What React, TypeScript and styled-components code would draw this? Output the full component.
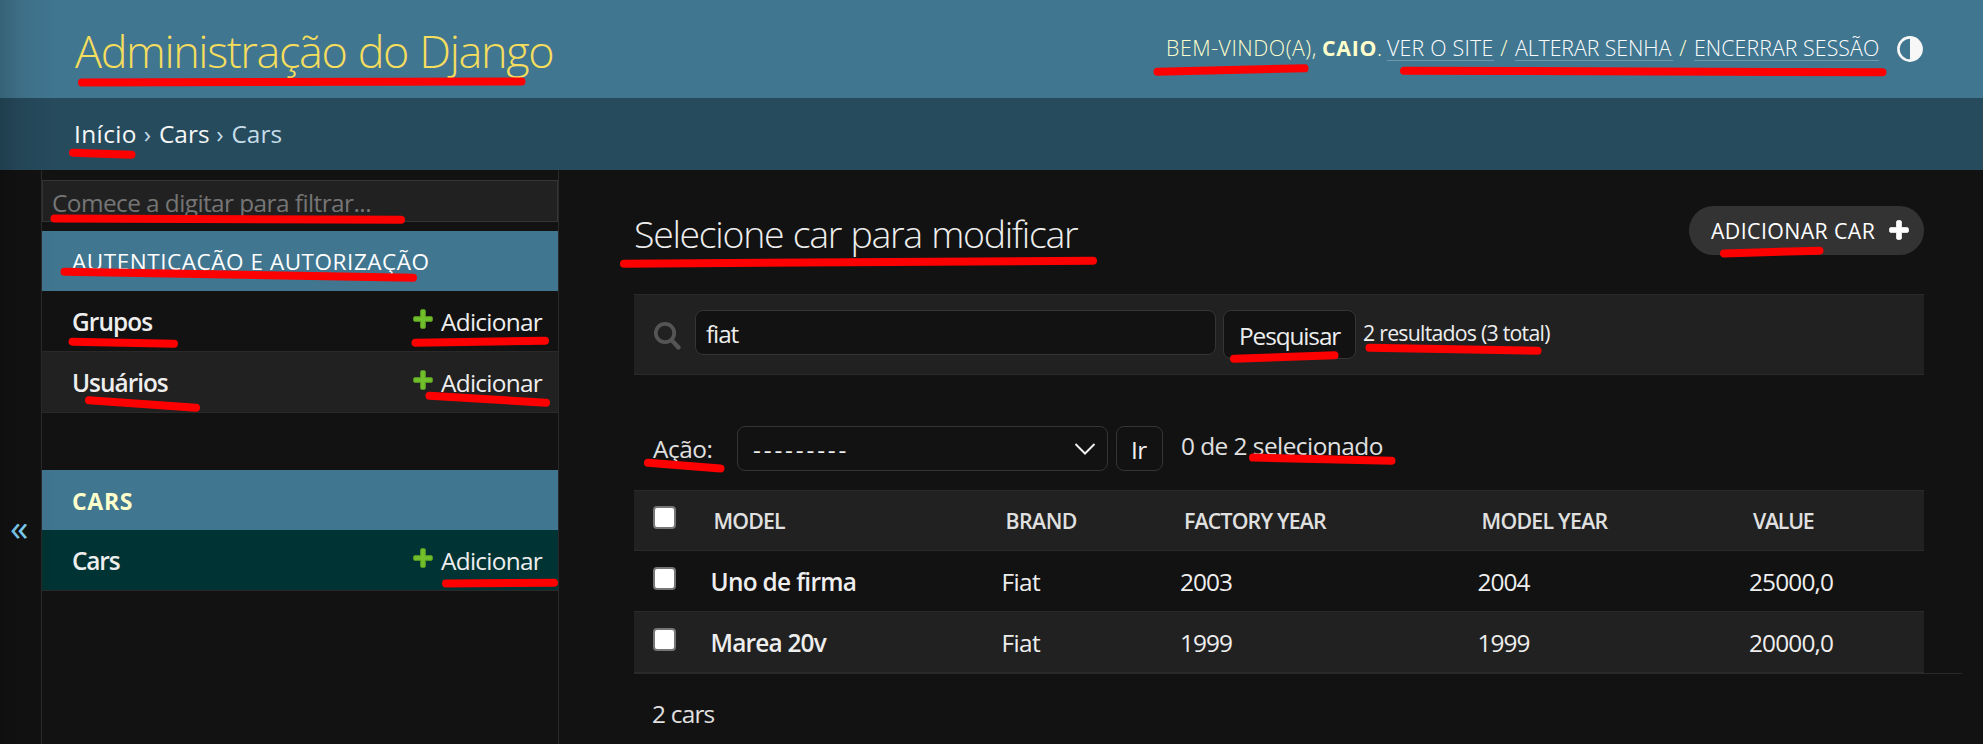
import React from 'react';
import styled, { createGlobalStyle } from 'styled-components';

const GlobalStyle = createGlobalStyle`
  * { box-sizing: border-box; }
  body {
    margin: 0;
    background: #121212;
    color: #eeeeee;
    font-family: "Open Sans", "Noto Sans", sans-serif;
    font-size: 24.4px;
    line-height: 30px;
    overflow: hidden;
  }
`;

const Page = styled.div`
  position: relative;
  width: 1983px;
  height: 744px;
  display: flex;
  flex-direction: column;
  overflow: hidden;
  white-space: nowrap;
`;

const Text = styled.span<{ $ls?: number }>`
  letter-spacing: ${p => p.$ls ?? 0}px;
`;

/* ---------- header ---------- */

const Header = styled.header`
  height: 98px;
  flex: none;
  display: flex;
  justify-content: space-between;
  padding: 0 60px 0 75px;
  background: #417690;
  color: #ffffcc;
`;

const SiteName = styled.h1`
  margin: 0;
  padding-top: 3px;
  font-size: 45px;
  font-weight: 300;
  line-height: 96px;
  letter-spacing: -1.39px;
  word-spacing: 1px;
  color: #f5dd5d;
`;

const UserTools = styled.div`
  display: flex;
  height: 30px;
  margin-top: 32px;
  font-size: 21.3px;
  font-weight: 300;
  line-height: 31px;
`;

const Welcome = styled.span`
  width: 156px;
  letter-spacing: 0.55px;
`;

const UserName = styled.strong`
  width: 55px;
  font-weight: 700;
  letter-spacing: 0.7px;
`;

const Dot = styled.span`
  width: 10px;
`;

const ToolLink = styled.a<{ $w: number; $ls: number }>`
  width: ${p => p.$w}px;
  height: 29px;
  border-bottom: 1px solid rgba(255, 255, 255, 0.25);
  letter-spacing: ${p => p.$ls}px;
  color: #ffffff;
`;

const Slash = styled.span`
  width: 21px;
  padding-right: 1px;
  text-align: center;
`;

const ThemeIcon = styled.svg`
  width: 26px;
  height: 26px;
  margin: 4px 0 0 18px;
`;

const Breadcrumbs = styled.nav`
  height: 72px;
  flex: none;
  display: flex;
  align-items: center;
  padding: 0 75px 0 74px;
  background: #264b5d;
  color: #c4dce8;
`;

const Crumb = styled.a<{ $w: number; $ls?: number }>`
  width: ${p => p.$w}px;
  letter-spacing: ${p => p.$ls ?? 0}px;
  color: #f7f7f7;
`;

const Arrow = styled.span`
  width: 23px;
  text-align: center;
`;

/* ---------- sidebar ---------- */

const Body = styled.div`
  flex: 1;
  display: flex;
  min-height: 0;
`;

const Toggle = styled.div`
  width: 42px;
  padding: 342px 0 0 10px;
  border-right: 1px solid #2a2a2a;
  color: #81d4fa;
  font-size: 37px;
`;

const Sidebar = styled.aside`
  width: 517px;
  border-right: 1px solid #2a2a2a;
  padding-top: 10px;
`;

const Filter = styled.div`
  height: 42px;
  margin-bottom: 9px;
  padding: 7px 9px;
  line-height: 30px;
  border: 1px solid #353535;
  background: #212121;
  color: #757575;
  letter-spacing: -0.57px;
`;

const Module = styled.section`
  margin-bottom: 57px;
`;

const Caption = styled.h2<{ $current?: boolean; $ls: number }>`
  margin: 0;
  height: 60px;
  padding: 2px 0 0 30px;
  background: #417690;
  font-size: ${p => (p.$current ? 23 : 22.5)}px;
  line-height: 58px;
  font-weight: ${p => (p.$current ? 700 : 400)};
  color: ${p => (p.$current ? '#ffffcc' : '#ffffff')};
  letter-spacing: ${p => p.$ls}px;
`;

const ModelRow = styled.div<{ $tone: string }>`
  height: 61px;
  display: flex;
  align-items: center;
  justify-content: space-between;
  padding: 2px 15px 0 30px;
  border-bottom: 1px solid #2a2a2a;
  background: ${p => p.$tone};
`;

const ModelName = styled.strong<{ $ls: number }>`
  font-weight: 600;
  letter-spacing: ${p => p.$ls}px;
`;

const AddLink = styled.a`
  display: flex;
  width: 130px;
  gap: 8px;
  letter-spacing: -0.72px;
`;

const PlusSvg = styled.svg<{ $top: number }>`
  width: 20px;
  height: 20px;
  flex: none;
  margin-top: ${p => p.$top}px;
`;

/* ---------- main ---------- */

const Main = styled.main`
  flex: 1;
  padding: 36px 21px 0 75px;
`;

const Content = styled.div`
  width: 1290px;
`;

const TitleRow = styled.div`
  display: flex;
  justify-content: space-between;
  height: 49px;
  margin-bottom: 39px;
`;

const Title = styled.h2`
  margin: 0;
  padding-top: 4px;
  font-size: 37.5px;
  line-height: 48px;
  font-weight: 300;
  letter-spacing: -1.32px;
  word-spacing: 1px;
`;

const AddButton = styled.a`
  display: flex;
  align-items: center;
  justify-content: space-between;
  width: 235px;
  height: 49px;
  padding: 0 15px 0 22px;
  border-radius: 28px;
  background: #333333;
  color: #ffffff;
  font-size: 21.3px;
`;

const SearchBar = styled.div`
  display: flex;
  height: 81px;
  padding: 15px 0 0 20px;
  border: solid #2a2a2a;
  border-width: 1px 0;
  background: #212121;
  margin-bottom: 51px;
`;

const SearchIcon = styled.svg`
  width: 28px;
  height: 29px;
  margin: 11px 13px 0 0;
`;

const Field = styled.div<{ $w: number; $h: number; $pad: number }>`
  display: flex;
  align-items: center;
  width: ${p => p.$w}px;
  height: ${p => p.$h}px;
  padding: 2px 0 0 ${p => p.$pad}px;
  border: 1px solid #353535;
  border-radius: 8px;
  background: #121212;
`;

const SearchButton = styled(Field)`
  margin: 0 7px;
`;

const Results = styled.span`
  font-size: 21.3px;
  line-height: 46px;
  letter-spacing: -0.76px;
`;

const Actions = styled.div`
  display: flex;
  align-items: center;
  height: 45px;
  margin-bottom: 19px;
  padding-left: 19px;
`;

const ActionLabel = styled.label`
  width: 84px;
  letter-spacing: -0.43px;
  color: #e0e0e0;
`;

const SelectBox = styled(Field)`
  justify-content: space-between;
  padding-right: 11px;
  margin-right: 8px;
`;

const Counter = styled.span`
  padding: 0 0 5px 18px;
  letter-spacing: -0.53px;
  color: #e0e0e0;
`;

const Row = styled.div<{ $kind: 'head' | 'odd' | 'even' }>`
  display: grid;
  grid-template-columns: 66px 292px 178.5px 297.5px 271.5px 184.5px;
  align-items: center;
  height: ${p => (p.$kind === 'odd' ? 60 : p.$kind === 'even' ? 62 : 61)}px;
  border: solid #2a2a2a;
  border-width: ${p => (p.$kind === 'odd' ? '0' : '1px 0')};
  background: ${p => (p.$kind === 'odd' ? '#121212' : '#212121')};
`;

const Th = styled.div<{ $ls: number }>`
  padding: 1px 0 0 13.500px;
  font-size: 21.3px;
  font-weight: 600;
  color: #e0e0e0;
  letter-spacing: ${p => p.$ls}px;
`;

const Td = styled.div<{ $ls: number; $strong?: boolean }>`
  padding: 1px 0 0 ${p => (p.$strong ? 10.5 : 9.5)}px;
  font-weight: ${p => (p.$strong ? 600 : 400)};
  letter-spacing: ${p => p.$ls}px;
`;

const Check = styled.span`
  width: 23px;
  height: 23px;
  margin: 0 0 6px 19px;
  border: 2px solid #767676;
  border-radius: 4px;
  background: #ffffff;
`;

const Paginator = styled.div`
  border-top: 1px solid #2a2a2a;
  padding: 25px 0 0 18px;
  letter-spacing: -0.78px;
  color: #e0e0e0;
`;

/* ---------- overlays ---------- */

const EdgeShadow = styled.div`
  position: absolute;
  inset: 0 auto 0 0;
  width: 56px;
  background: linear-gradient(to right, rgba(0, 0, 0, 0.17), rgba(0, 0, 0, 0.06) 40%, rgba(0, 0, 0, 0));
  pointer-events: none;
`;

const Marks = styled.svg`
  position: absolute;
  inset: 0;
  pointer-events: none;
`;

const STROKES = [
  [82, 82.5, 521.5, 81.5], [73, 152.7, 131.5, 154.7], [54.5, 218.6, 401, 219.7],
  [64.5, 271.7, 413, 277.7], [72.5, 341.7, 174, 343.7], [415.5, 342.7, 545, 340.7],
  [89, 400.3, 196, 407.7], [429.5, 395.7, 546, 402.7], [446, 583.5, 554, 582.7],
  [1157.5, 71.7, 1304.5, 68.3], [1404, 70.7, 1882.5, 72.3], [624, 263.7, 1093, 260.8],
  [1724, 253.4, 1819.5, 250.7], [1234, 358.7, 1334.5, 355.3], [1369.5, 347.7, 1537.5, 350.7],
  [648, 462.7, 720.5, 468.5], [1253, 457.6, 1391.5, 460.7],
];

function Plus({ fill, edge, top = 0 }: { fill: string; edge?: string; top?: number }) {
  return (
    <PlusSvg $top={top} viewBox="0 0 20 20">
      <path
        d="M8.6.7h2.8q.9 0 .9.9v6.1h6.1q.9 0 .9.9v2.8q0 .9-.9.9h-6.1v6.1q0 .9-.9.9H8.6q-.9 0-.9-.9v-6.1H1.6q-.9 0-.9-.9V8.6q0-.9.9-.9h6.1V1.6q0-.9.9-.9z"
        fill={fill} stroke={edge ?? fill} strokeWidth="1"
      />
    </PlusSvg>
  );
}

function Model({ name, ls, tone }: { name: string; ls: number; tone: string }) {
  return (
    <ModelRow $tone={tone}>
      <ModelName $ls={ls}>{name}</ModelName>
      <AddLink><Plus fill="#70bf2b" edge="#5fa225" top={2} /><span>Adicionar</span></AddLink>
    </ModelRow>
  );
}

const CARS: [string, number, string, string, string][] = [
  ['Uno de firma', -0.68, '2003', '2004', '25000,0'],
  ['Marea 20v', -0.8, '1999', '1999', '20000,0'],
];

export default function App() {
  return (
    <Page>
      <GlobalStyle />
      <Header>
        <SiteName>Administração do Django</SiteName>
        <UserTools>
          <Welcome>BEM-VINDO(A),</Welcome>
          <UserName>CAIO</UserName>
          <Dot>.</Dot>
          <ToolLink $w={107} $ls={0.26}>VER O SITE</ToolLink>
          <Slash>/</Slash>
          <ToolLink $w={158} $ls={-0.07}>ALTERAR SENHA</ToolLink>
          <Slash>/</Slash>
          <ToolLink $w={185} $ls={0.08}>ENCERRAR SESSÃO</ToolLink>
          <ThemeIcon viewBox="0 0 26 26">
            <circle cx="13" cy="13" r="11.6" fill="none" stroke="#f7f7f7" strokeWidth="2.6" />
            <path d="M13 1a12 12 0 0 1 0 24z" fill="#f7f7f7" />
          </ThemeIcon>
        </UserTools>
      </Header>
      <Breadcrumbs>
        <Crumb $w={62} $ls={0.4}>Início</Crumb>
        <Arrow>›</Arrow>
        <Crumb $w={49.5}>Cars</Crumb>
        <Arrow>›</Arrow>
        <span>Cars</span>
      </Breadcrumbs>
      <Body>
        <Toggle>«</Toggle>
        <Sidebar>
          <Filter>Comece a digitar para filtrar...</Filter>
          <Module>
            <Caption $ls={0.55}>AUTENTICAÇÃO E AUTORIZAÇÃO</Caption>
            <Model name="Grupos" ls={-0.9} tone="#121212" />
            <Model name="Usuários" ls={-1} tone="#212121" />
          </Module>
          <Module>
            <Caption $current $ls={0.7}>CARS</Caption>
            <Model name="Cars" ls={-1.14} tone="#003333" />
          </Module>
        </Sidebar>
        <Main>
          <Content>
            <TitleRow>
              <Title>Selecione car para modificar</Title>
              <AddButton><Text $ls={0.4}>ADICIONAR CAR</Text><Plus fill="#ffffff" top={-2} /></AddButton>
            </TitleRow>
            <SearchBar>
              <SearchIcon viewBox="0 0 28 29">
                <circle cx="11" cy="12" r="9.2" fill="none" stroke="#555555" strokeWidth="3.8" />
                <path d="M18 19.5l6.500 7" stroke="#555555" strokeWidth="4.4" strokeLinecap="round" />
              </SearchIcon>
              <Field $w={521} $h={45} $pad={10}><Text $ls={-1.1}>fiat</Text></Field>
              <SearchButton $w={133} $h={49} $pad={15}><Text $ls={-1.11}>Pesquisar</Text></SearchButton>
              <Results>2 resultados (3 total)</Results>
            </SearchBar>
            <Actions>
              <ActionLabel>Ação:</ActionLabel>
              <SelectBox $w={371} $h={45} $pad={15}>
                <Text $ls={2.84}>---------</Text>
                <svg width="22" height="14" viewBox="0 0 22 14">
                  <path d="M1.5 1L11 10.5 20.5 1" fill="none" stroke="#eeeeee" strokeWidth="2" />
                </svg>
              </SelectBox>
              <Field $w={47} $h={45} $pad={14}><Text $ls={-0.5}>Ir</Text></Field>
              <Counter>0 de 2 selecionado</Counter>
            </Actions>
            <Row $kind="head">
              <Check />
              <Th $ls={-0.82}>MODEL</Th>
              <Th $ls={-0.53}>BRAND</Th>
              <Th $ls={-0.82}>FACTORY YEAR</Th>
              <Th $ls={-0.73}>MODEL YEAR</Th>
              <Th $ls={-1.26}>VALUE</Th>
            </Row>
            {CARS.map(([name, ls, factory, model, value], i) => (
              <Row key={name} $kind={i % 2 ? 'even' : 'odd'}>
                <Check />
                <Td $strong $ls={ls}>{name}</Td>
                <Td $ls={-0.6}>Fiat</Td>
                <Td $ls={-0.95}>{factory}</Td>
                <Td $ls={-0.95}>{model}</Td>
                <Td $ls={-0.84}>{value}</Td>
              </Row>
            ))}
          </Content>
          <Paginator>2 cars</Paginator>
        </Main>
      </Body>
      <EdgeShadow />
      <Marks width="1983" height="744" viewBox="0 0 1983 744">
        {STROKES.map(([x1, y1, x2, y2]) => (
          <line key={`${x1}-${y1}`} x1={x1} y1={y1} x2={x2} y2={y2} stroke="#ff0000" strokeWidth="8" strokeLinecap="round" />
        ))}
      </Marks>
    </Page>
  );
}
